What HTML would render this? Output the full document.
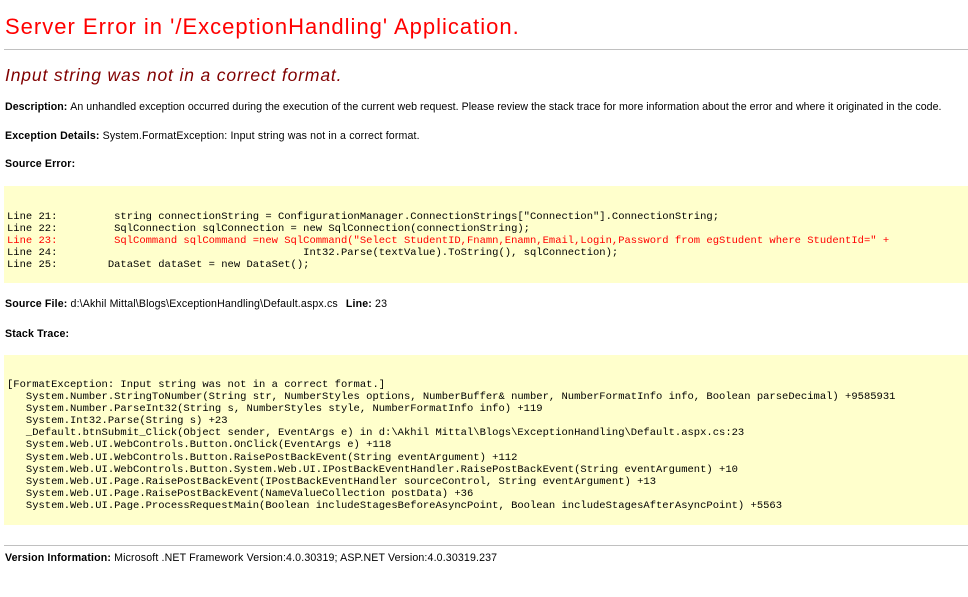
<!DOCTYPE html>
<html><head><meta charset="utf-8"><style>
body{margin:0;background:#fff;font-family:"Liberation Sans",Verdana,sans-serif;width:968px;height:597px;overflow:hidden;position:relative}
.a{position:absolute;white-space:nowrap}
.t{left:5px;top:14px;font-size:22px;letter-spacing:1px;color:#f00}
.hr{position:absolute;left:4px;right:0;height:1px;background:#c0c0c0}
.s{left:5px;top:65px;font-size:17.5px;letter-spacing:0.85px;font-style:italic;color:#800000}
.p{font-size:10.6px;color:#000;left:5px;letter-spacing:0.15px}
.p b{font-weight:bold}
.box{position:absolute;left:4px;right:0;background:#ffffcc}
pre{margin:0;font-family:"Liberation Mono",monospace;position:absolute;left:7px}
.c{font-size:10.5px;line-height:12px}
.k{font-size:10.5px;line-height:12.1px}
.r{color:#f00}
</style></head><body>
<div class="a t">Server Error in '/ExceptionHandling' Application.</div>
<div class="hr" style="top:49px"></div>
<div class="a s">Input string was not in a correct format.</div>
<div class="a p" style="top:101px;letter-spacing:0.04px"><b>Description: </b>An unhandled exception occurred during the execution of the current web request. Please review the stack trace for more information about the error and where it originated in the code.</div>
<div class="a p" style="top:130px"><b>Exception Details: </b>System.FormatException: Input string was not in a correct format.</div>
<div class="a p" style="top:158px"><b>Source Error:</b></div>
<div class="box" style="top:186px;height:97px"></div>
<pre class="c" style="top:211px">Line 21:         string connectionString = ConfigurationManager.ConnectionStrings["Connection"].ConnectionString;
Line 22:         SqlConnection sqlConnection = new SqlConnection(connectionString);
<span class="r">Line 23:         SqlCommand sqlCommand =new SqlCommand("Select StudentID,Fnamn,Enamn,Email,Login,Password from egStudent where StudentId=" +</span>
Line 24:                                       Int32.Parse(textValue).ToString(), sqlConnection);
Line 25:        DataSet dataSet = new DataSet();</pre>
<div class="a p" style="top:298px"><b>Source File: </b>d:\Akhil Mittal\Blogs\ExceptionHandling\Default.aspx.cs<b style="margin-left:8px">Line: </b>23</div>
<div class="a p" style="top:328px"><b>Stack Trace:</b></div>
<div class="box" style="top:355px;height:170px"></div>
<pre class="k" style="top:379px">[FormatException: Input string was not in a correct format.]
   System.Number.StringToNumber(String str, NumberStyles options, NumberBuffer&amp; number, NumberFormatInfo info, Boolean parseDecimal) +9585931
   System.Number.ParseInt32(String s, NumberStyles style, NumberFormatInfo info) +119
   System.Int32.Parse(String s) +23
   _Default.btnSubmit_Click(Object sender, EventArgs e) in d:\Akhil Mittal\Blogs\ExceptionHandling\Default.aspx.cs:23
   System.Web.UI.WebControls.Button.OnClick(EventArgs e) +118
   System.Web.UI.WebControls.Button.RaisePostBackEvent(String eventArgument) +112
   System.Web.UI.WebControls.Button.System.Web.UI.IPostBackEventHandler.RaisePostBackEvent(String eventArgument) +10
   System.Web.UI.Page.RaisePostBackEvent(IPostBackEventHandler sourceControl, String eventArgument) +13
   System.Web.UI.Page.RaisePostBackEvent(NameValueCollection postData) +36
   System.Web.UI.Page.ProcessRequestMain(Boolean includeStagesBeforeAsyncPoint, Boolean includeStagesAfterAsyncPoint) +5563</pre>
<div class="hr" style="top:545px"></div>
<div class="a p" style="top:552px"><b>Version Information: </b>Microsoft .NET Framework Version:4.0.30319; ASP.NET Version:4.0.30319.237</div>
</body></html>
